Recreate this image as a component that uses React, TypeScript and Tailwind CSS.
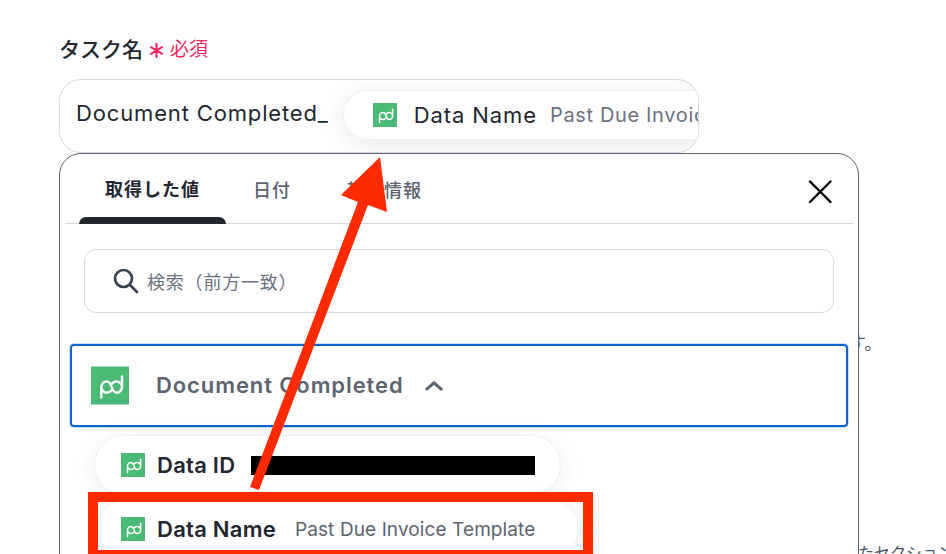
const fontStack = { fontFamily: '"Inter", "Noto Sans CJK JP", sans-serif' };

function PandaDocLogo({ className }: { className: string }) {
  return (
    <svg viewBox="0 0 24 24" className={className}>
      <rect width="24" height="24" fill="#4aba76" />
      <path
        d="M6.500 19.500V13a3.600 3.600 0 0 1 3.600-3.600c3.400 0 2.600 7.200 5.900 7.200a3.600 3.600 0 0 0 3.600-3.600V6.300M19.600 13a3.600 3.600 0 0 0-3.600-3.600c-1.200 0-2 .5-2.700 1.400M6.500 13a3.600 3.600 0 0 0 3.600 3.600c1.200 0 2-.5 2.700-1.400"
        fill="none"
        stroke="#fff"
        strokeWidth="1.500"
        strokeLinecap="round"
      />
    </svg>
  );
}

function ValuePill({ name, children, className }: { name: string; children?: React.ReactNode; className: string }) {
  return (
    <div className={`flex items-center rounded-full border border-[#eef0f3] bg-white shadow-[0_4px_24px_rgba(30,40,60,0.08)] ${className}`}>
      <PandaDocLogo className="h-6 w-6 shrink-0" />
      <span className="ml-3 text-[22px] font-semibold leading-none tracking-[0.25px] whitespace-nowrap text-[#22272f]">{name}</span>
      {children}
    </div>
  );
}

export default function App() {
  return (
    <div style={fontStack} className="relative h-[554px] w-[946px] overflow-hidden bg-white">
      {/* text of the page behind the panel */}
      <span className="absolute left-[848px] top-[330px] text-lg text-[#4b5563]">す。</span>
      <span className="absolute left-[858px] top-[541px] text-base whitespace-nowrap text-[#4b5563]">たセクション</span>

      <div className="relative pl-[59px] pt-[36px]">
        <div className="flex h-[26px] items-center">
          <span className="text-[21px] font-medium leading-none text-[#22272f]">タスク名</span>
          <svg viewBox="0 0 16 16" className="ml-[6px] mt-[3px] h-[15px] w-[15px]" fill="none" stroke="#f5255e" strokeWidth="2.200" strokeLinecap="round">
            <path d="M8 1v14M2 4.500l12 7M14 4.500l-12 7" />
          </svg>
          <span className="ml-[6px] text-[19px] leading-none text-[#f5255e]">必須</span>
        </div>

        <div className="mt-[17px] flex h-[74px] w-[640px] items-center overflow-hidden rounded-[22px] border border-[#d5d8de] bg-white pl-[16px]">
          <span className="-mt-[6px] text-[22px] leading-none tracking-[0.85px] whitespace-nowrap text-[#22272f]">Document Completed_</span>
          <div className="-mt-[2px] ml-[14px] flex h-[50px] shrink-0 items-center rounded-full border border-[#eef0f3] bg-white pl-[29px] pr-8 shadow-[0_4px_24px_rgba(30,40,60,0.1)]">
            <PandaDocLogo className="h-6 w-6 shrink-0" />
            <span className="ml-[17px] text-[22px] leading-none tracking-[0.9px] whitespace-nowrap text-[#22272f]">Data Name</span>
            <span className="ml-[13px] text-[20px] leading-none tracking-[0.65px] whitespace-nowrap text-[#6b7280]">Past Due Invoice Template</span>
          </div>
        </div>

        <div className="h-[420px] w-[800px] rounded-t-[22px] border border-[#5b6470] bg-white px-[5px]">
          <div className="flex h-[70px] items-end border-b border-[#d5d8de] pl-[14px]">
            <div className="flex h-[62px] w-[147px] flex-col items-center justify-end text-lg font-semibold tracking-[1px] text-[#22272f]">
              <span className="mb-[13px]">取得した値</span>
              <span className="-mb-px h-[7px] w-full rounded-t-lg bg-[#22272f]" />
            </div>
            <div className="flex h-[62px] w-[92px] items-center justify-center pb-[2px] text-lg font-medium tracking-[1px] text-[#5b6470]">日付</div>
            <div className="flex h-[62px] w-[132px] items-center justify-center pb-[2px] text-lg font-medium tracking-[1px] text-[#5b6470]">基本情報</div>
            <svg viewBox="0 0 24 24" className="mb-[19px] ml-[358px] h-[24px] w-[24px] text-black" fill="none" stroke="currentColor" strokeWidth="2.400" strokeLinecap="round">
              <path d="M2 1.500 22.500 22M22.500 1.500 2 22" />
            </svg>
          </div>

          <div className="mx-[19px] mt-[25px] flex h-[64px] items-center rounded-xl border border-[#d5d8de] pl-7">
            <svg viewBox="0 0 26 26" className="h-[26px] w-[26px]" fill="none" stroke="#374151" strokeWidth="2.600" strokeLinecap="round">
              <circle cx="10.500" cy="10.500" r="8.500" />
              <path d="M17 17l7 7" />
            </svg>
            <span className="ml-2 mt-[3px] text-lg tracking-[0.8px] text-[#6b7280]">検索（前方一致）</span>
          </div>

          <div className="mx-[5px] mt-[31px] flex h-[83px] items-center rounded border-2 border-[#0b64d2] pl-[19px] shadow-[0_0_0_1px_rgba(11,100,210,0.2)]">
            <PandaDocLogo className="h-[39px] w-[38px]" />
            <span className="ml-[27px] text-[22px] font-semibold tracking-[0.9px] text-[#5b6470]">Document Completed</span>
            <svg viewBox="0 0 20 12" className="ml-[21px] h-[11px] w-[18px]" fill="none" stroke="#5b6470" strokeWidth="3.400" strokeLinecap="round" strokeLinejoin="round">
              <path d="M2 10l8-7 8 7" />
            </svg>
          </div>

          <ValuePill name="Data ID" className="ml-[29px] mt-[8px] h-[60px] w-[467px] pl-[26px]">
            <span className="ml-4 h-[19px] w-[284px] bg-black" />
          </ValuePill>
          <ValuePill name="Data Name" className="ml-[32px] mt-[4px] h-[60px] w-[482px] pl-[23px]">
            <span className="ml-[19px] text-[19px] leading-none tracking-[0.1px] whitespace-nowrap text-[#5b6470]">Past Due Invoice Template</span>
          </ValuePill>
        </div>
      </div>

      {/* annotations over the screenshot */}
      <div className="absolute left-[88px] top-[492px] h-[68px] w-[505px] border-[10px] border-[#ff2a00]" />
      <svg viewBox="0 0 946 554" className="absolute inset-0 h-full w-full">
        <polygon points="380,157 341,195 358,202 250,487 259,490 368,205 387,212" fill="#ff2a00" />
      </svg>
    </div>
  );
}
